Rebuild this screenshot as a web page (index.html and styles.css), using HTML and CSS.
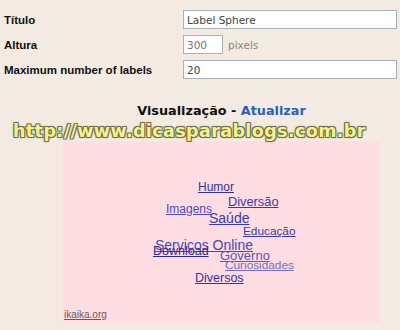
FILE: index.html
```html
<!DOCTYPE html>
<html lang="pt">
<head>
  <meta charset="UTF-8" />
  <title>Label Sphere</title>
  <link rel="stylesheet" href="styles.css">
</head>
<body>
  <div class="form">
    <label for="titulo">Título</label>
    <input type="text" id="titulo" value="Label Sphere" />

    <label for="altura">Altura</label>
    <div class="inline">
      <input type="text" id="altura" class="short" value="300" />
      <span class="unit">pixels</span>
    </div>

    <label for="max">Maximum number of labels</label>
    <input type="text" id="max" value="20" />
  </div>

  <div class="preview">
    <h2>Visualização - <a href="#">Atualizar</a></h2>
    <div class="sphere">
      <a class="tag t1" href="#">Humor</a>
      <a class="tag t2" href="#">Diversão</a>
      <a class="tag t3" href="#">Imagens</a>
      <a class="tag t4" href="#">Saúde</a>
      <a class="tag t5" href="#">Educação</a>
      <a class="tag t6" href="#">Serviços Online</a>
      <a class="tag t7" href="#">Download</a>
      <a class="tag t8" href="#">Governo</a>
      <a class="tag t9" href="#">Curiosidades</a>
      <a class="tag t10" href="#">Diversos</a>
      <a class="credit" href="#">ikaika.org</a>
    </div>
  </div>

  <div class="watermark">http://www.dicasparablogs.com.br</div>
</body>
</html>
```

FILE: styles.css
```css
body { margin: 0; background: #f3ebe2; font-family: "Liberation Sans", Arial, sans-serif; position: relative; height: 330px; overflow: hidden; }

.form {
  display: grid; grid-template-columns: 179px 214px; row-gap: 6px;
  padding: 10px 0 0 4px; align-items: center;
}
.form label { font-size: 11.5px; font-weight: bold; color: #111; }
.form input {
  height: 19px; box-sizing: border-box; border: 1px solid #a8b0ba; background: #fff;
  font-family: "DejaVu Sans", sans-serif; font-size: 10.5px; color: #444; padding: 0 3px; margin: 0;
}
.inline { display: flex; align-items: center; gap: 5px; }
.form input.short { width: 40px; color: #777; }
.unit { font-family: "DejaVu Sans", sans-serif; font-size: 10.5px; color: #888; }

.preview { margin: 24px 0 0 63px; width: 317px; }
.preview h2 {
  margin: 0 0 23px; text-align: center; font-family: "DejaVu Sans", sans-serif;
  font-size: 12.8px; font-weight: bold; color: #111;
}
.preview h2 a { color: #2b5fb8; text-decoration: none; }

.sphere { position: relative; height: 182px; background: #ffdde2; }
.tag { position: absolute; line-height: 1; font-size: 12px; color: #333399; white-space: nowrap; }
.t1 { left: 135px; top: 40px; }
.t2 { left: 165px; top: 55px; font-size: 12.8px; color: #3a3aa8; }
.t3 { left: 103px; top: 62px; color: #4a4ab8; }
.t4 { left: 146px; top: 70px; font-size: 14px; color: #3b3ba8; }
.t5 { left: 180px; top: 85px; font-size: 11.8px; color: #3a3aa5; }
.t6 { left: 92px; top: 97px; font-size: 14px; color: #4848b5; }
.t7 { left: 90px; top: 104px; font-size: 12.5px; color: #2c2c90; }
.t8 { left: 157px; top: 108px; font-size: 13px; color: #5555bb; }
.t9 { left: 162px; top: 119px; font-size: 11.8px; color: #7070c8; }
.t10 { left: 132px; top: 131px; font-size: 12.5px; color: #333399; }
.credit {
  position: absolute; left: 1px; bottom: 3px; font-size: 10px; color: #6b5a5a;
}

.watermark {
  position: absolute; left: 13px; top: 121px;
  font-family: "DejaVu Sans", sans-serif; font-weight: bold; font-size: 17.5px; letter-spacing: 0.4px;
  color: #f4f38a;
  text-shadow: 1px 1px 0 #6e6c52, -1px -1px 0 #6e6c52, 1px -1px 0 #6e6c52, -1px 1px 0 #6e6c52,
    0 0 3px #8a8868;
}
```
